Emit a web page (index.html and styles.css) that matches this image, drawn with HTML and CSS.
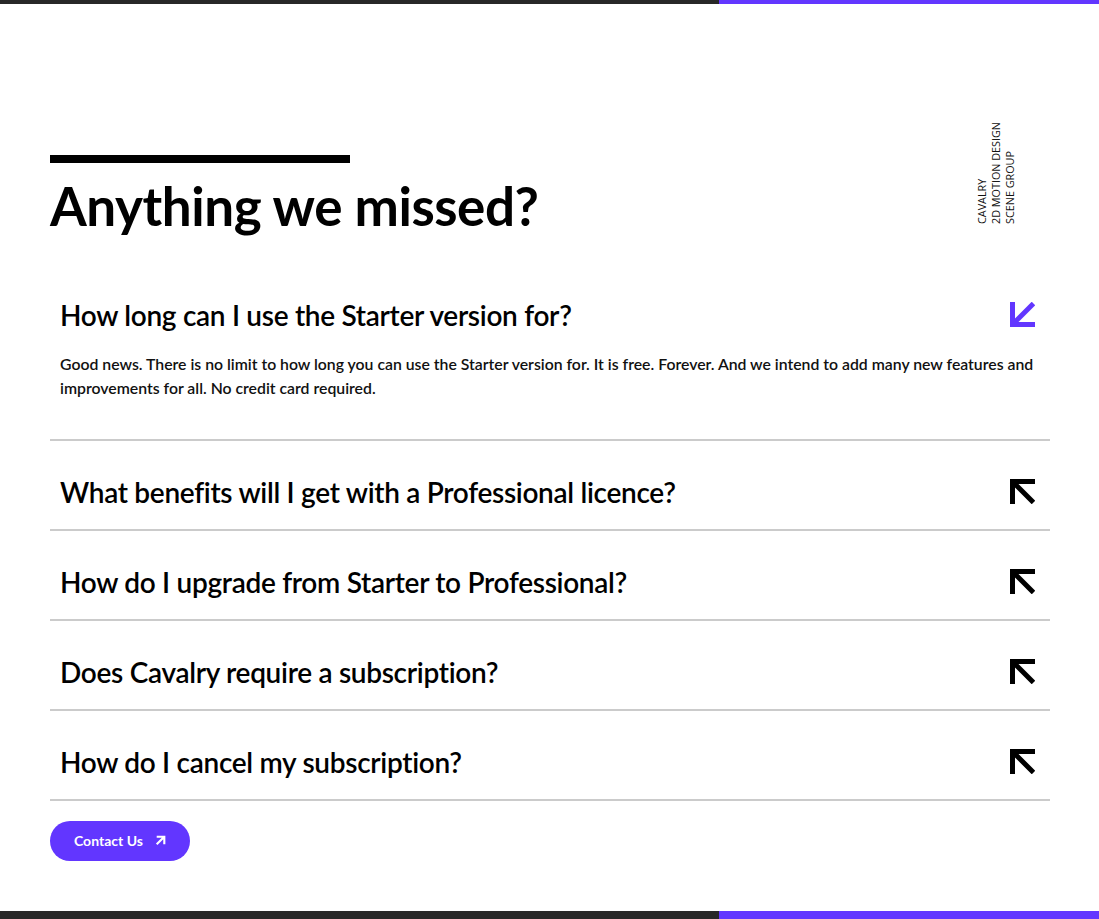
FILE: index.html
```html
<!DOCTYPE html>
<html lang="en">
<head>
    <meta charset="UTF-8">
    <meta name="viewport" content="width=device-width, initial-scale=1.0">
    <title>FAQ - Cavalry</title>
    <link rel="stylesheet" href="styles.css">
</head>
<body>
    <div class="bar bar-top">
        <span class="bar-dark"></span>
        <span class="bar-accent"></span>
    </div>

    <main class="faq">
        <header class="faq-header">
            <div class="faq-title-wrap">
                <span class="faq-rule"></span>
                <h1 class="faq-title">Anything we missed?</h1>
            </div>
            <p class="faq-tag">
                <span>CAVALRY</span>
                <span>2D MOTION DESIGN</span>
                <span>SCENE GROUP</span>
            </p>
        </header>

        <ul class="faq-list">
            <li class="faq-item open">
                <div class="faq-question">
                    <span>How long can I use the Starter version for?</span>
                    <svg class="faq-icon" viewBox="0 0 25 25"><path d="M2.5 25V2.5H25M2.5 2.5L23.5 23.5"/></svg>
                </div>
                <p class="faq-answer">Good news. There is no limit to how long you can use the Starter version for. It is free. Forever. And we intend to add many new features and improvements for all. No credit card required.</p>
            </li>
            <li class="faq-item">
                <div class="faq-question">
                    <span>What benefits will I get with a Professional licence?</span>
                    <svg class="faq-icon" viewBox="0 0 25 25"><path d="M2.5 25V2.5H25M2.5 2.5L23.5 23.5"/></svg>
                </div>
            </li>
            <li class="faq-item">
                <div class="faq-question">
                    <span>How do I upgrade from Starter to Professional?</span>
                    <svg class="faq-icon" viewBox="0 0 25 25"><path d="M2.5 25V2.5H25M2.5 2.5L23.5 23.5"/></svg>
                </div>
            </li>
            <li class="faq-item">
                <div class="faq-question">
                    <span>Does Cavalry require a subscription?</span>
                    <svg class="faq-icon" viewBox="0 0 25 25"><path d="M2.5 25V2.5H25M2.5 2.5L23.5 23.5"/></svg>
                </div>
            </li>
            <li class="faq-item">
                <div class="faq-question">
                    <span>How do I cancel my subscription?</span>
                    <svg class="faq-icon" viewBox="0 0 25 25"><path d="M2.5 25V2.5H25M2.5 2.5L23.5 23.5"/></svg>
                </div>
            </li>
        </ul>

        <a class="contact-button" href="#">
            Contact Us
            <svg class="contact-icon" viewBox="0 0 26 26"><path d="M4 4H22V22M22 4L4 22"/></svg>
        </a>
    </main>

    <div class="bar bar-bottom">
        <span class="bar-dark"></span>
        <span class="bar-accent"></span>
    </div>
</body>
</html>
```

FILE: styles.css
```css
* {
    margin: 0;
    padding: 0;
    box-sizing: border-box;
}

body {
    font-family: 'Lato', 'Open Sans', sans-serif;
    color: #111;
    background: #fff;
}

/* top / bottom stripes */
.bar {
    display: flex;
}

.bar-top {
    height: 4px;
}

.bar-bottom {
    height: 8px;
}

.bar-dark {
    width: 719px;
    background: #282828;
}

.bar-accent {
    flex: 1;
    background: #6236ff;
}

.faq {
    width: 1000px;
    margin-left: 50px;
    padding: 118px 0 50px;
}

.faq-header {
    display: flex;
    justify-content: space-between;
    align-items: flex-end;
}

.faq-rule {
    display: block;
    width: 300px;
    height: 8px;
    background: #000;
    margin-bottom: 13px;
}

.faq-title {
    font-size: 53px;
    font-weight: 700;
    line-height: 60px;
    letter-spacing: -0.45px;
    color: #000;
}

.faq-tag {
    display: flex;
    flex-direction: column;
    writing-mode: vertical-rl;
    transform: rotate(180deg);
    font-family: 'Open Sans', sans-serif;
    font-size: 10.8px;
    line-height: 14px;
    color: #111;
    margin-right: 33px;
    margin-bottom: 12px;
}

.faq-list {
    list-style: none;
    margin-top: 28px;
}

.faq-item {
    border-bottom: 2px solid #cbcbcb;
}

.faq-question {
    display: flex;
    justify-content: space-between;
    align-items: center;
    padding: 35px 15px 21px 10px;
    font-size: 28px;
    line-height: 32px;
    font-weight: 600;
    letter-spacing: -0.3px;
    color: #000;
    cursor: pointer;
}

.faq-icon {
    width: 25px;
    height: 25px;
    fill: none;
    stroke: #000;
    stroke-width: 5;
}

.faq-item.open .faq-icon {
    stroke: #6236ff;
    transform: rotate(-90deg);
}

.faq-answer {
    padding: 0 0 39px 10px;
    font-size: 15.8px;
    line-height: 24px;
    font-weight: 600;
    color: #111;
}

.contact-button {
    display: inline-flex;
    align-items: center;
    gap: 12px;
    height: 40px;
    margin-top: 20px;
    padding: 0 24px;
    border-radius: 20px;
    background: #6236ff;
    color: #fff;
    font-size: 14px;
    font-weight: 700;
    text-decoration: none;
}

.contact-icon {
    width: 11px;
    height: 11px;
    fill: none;
    stroke: #fff;
    stroke-width: 5;
}
```
